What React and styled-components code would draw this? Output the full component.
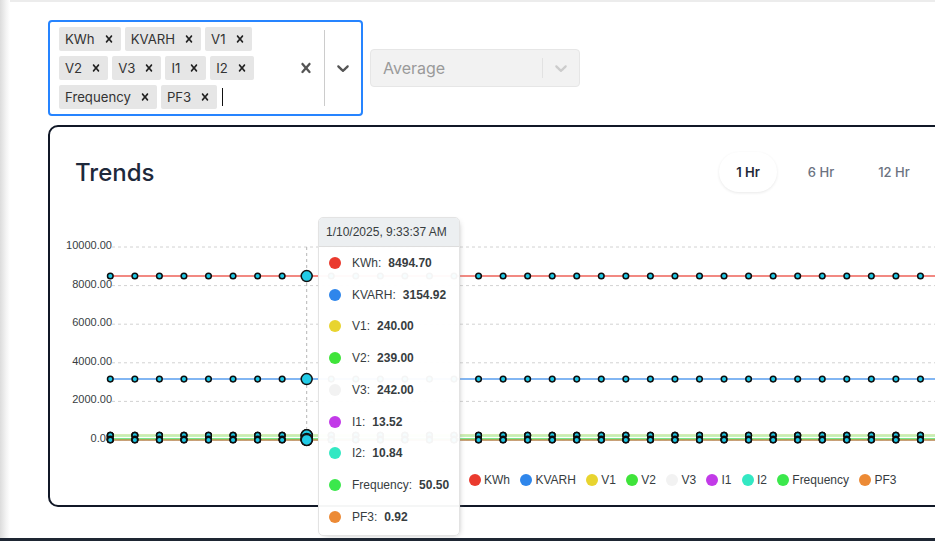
import React from "react";
import styled, { createGlobalStyle } from "styled-components";

const GlobalStyle = createGlobalStyle`
  html, body {
    margin: 0;
    padding: 0;
    background: #fff;
  }
  body {
    font-family: Inter, "Liberation Sans", sans-serif;
    overflow: hidden;
  }
  #root {
    width: 935px;
    height: 541px;
    overflow: hidden;
  }
`;

const chartFont = `"Liberation Sans", Arial, Helvetica, sans-serif`;

const series = [
  { name: "KWh", value: 8494.7, color: "#ea3a2e" },
  { name: "KVARH", value: 3154.92, color: "#2f86eb" },
  { name: "V1", value: 240, color: "#e8d42f" },
  { name: "V2", value: 239, color: "#3fe43a" },
  { name: "V3", value: 242, color: "#f2f2f2" },
  { name: "I1", value: 13.52, color: "#c23ae8" },
  { name: "I2", value: 10.84, color: "#33e8c3" },
  { name: "Frequency", value: 50.5, color: "#3be84c" },
  { name: "PF3", value: 0.92, color: "#ec8a35" },
];

const chips = ["KWh", "KVARH", "V1", "V2", "V3", "I1", "I2", "Frequency", "PF3"];

// chart geometry (svg coords)
const CHART_W = 899;
const CHART_H = 268;
const ZERO_Y = 247;
const SPAN = 193; // pixels for 10000
const X0 = 60.3;
const STEP = 24.55;
const POINTS = 35;
const HOVER = 8;
const yOf = (v) => ZERO_Y - (v / 10000) * SPAN;
const xOf = (i) => X0 + i * STEP;
const ticks = [0, 2000, 4000, 6000, 8000, 10000];

const Shell = styled.div`
  display: grid;
  grid-template-columns: 10px 1fr;
  grid-template-rows: 538px 3px;
  height: 541px;
  overflow: hidden;
`;

const SideShadow = styled.div`
  background: linear-gradient(to right, #dcdcdc, #f3f3f3 60%, #fff);
`;

const Main = styled.main`
  border-top: 2px solid #ececec;
  padding: 18px 0 0 38px;
  overflow: hidden;
`;

const FooterBar = styled.div`
  grid-column: 1 / -1;
  background: #1e2633;
`;

const Controls = styled.div`
  display: flex;
  align-items: center;
  gap: 7px;
`;

const MultiSelect = styled.div`
  box-sizing: border-box;
  width: 315px;
  display: flex;
  border: 2px solid #2684ff;
  border-radius: 4px;
  background: #fff;
`;

const ValueArea = styled.div`
  flex: 1;
  display: flex;
  flex-wrap: wrap;
  align-items: center;
  gap: 5px 4px;
  padding: 5px 6px 5px 9px;
`;

const Chip = styled.div`
  display: flex;
  align-items: center;
  height: 24px;
  background: #e6e6e6;
  border-radius: 2px;
`;

const ChipLabel = styled.span`
  font-size: 13.2px;
  color: #333;
  padding: 0 3px 0 6px;
  line-height: 24px;
`;

const ChipRemove = styled.span`
  display: flex;
  align-items: center;
  padding: 0 5px 0 4px;
  color: #222;
`;

const Caret = styled.span`
  width: 1px;
  height: 18px;
  margin-left: 1px;
  background: #111;
`;

const Indicators = styled.div`
  display: flex;
  align-items: stretch;
`;

const Indicator = styled.div`
  display: flex;
  align-items: center;
  padding: 8px;
  color: ${({ $muted }) => ($muted ? "#cccccc" : "#555555")};
`;

const Separator = styled.span`
  width: 1px;
  margin: 8px 0;
  background: ${({ $light }) => ($light ? "#e2e2e2" : "#cccccc")};
`;

const SingleSelect = styled.div`
  box-sizing: border-box;
  width: 210px;
  height: 38px;
  display: flex;
  border: 1px solid #e6e6e6;
  border-radius: 4px;
  background: #f2f2f2;
`;

const Placeholder = styled.div`
  flex: 1;
  display: flex;
  align-items: center;
  padding: 0 10px 0 12px;
  font-size: 16px;
  color: #9a9a9a;
`;

const Card = styled.section`
  box-sizing: border-box;
  width: 903px;
  margin-top: 9px;
  border: 2px solid #111827;
  border-radius: 10px;
  background: #fff;
  padding-bottom: 6px;
`;

const CardHeader = styled.div`
  display: flex;
  justify-content: space-between;
  align-items: center;
  height: 40px;
  padding: 25px 26px 0 25px;
`;

const Title = styled.h2`
  margin: 0;
  font-size: 24px;
  font-weight: 500;
  color: #1e293b;
`;

const RangeGroup = styled.div`
  display: flex;
  gap: 15px;
`;

const RangeButton = styled.button`
  width: 58px;
  height: 40px;
  border: none;
  border-radius: 20px;
  font-family: Inter, sans-serif;
  font-size: 13px;
  font-weight: ${({ $active }) => ($active ? 600 : 500)};
  color: ${({ $active }) => ($active ? "#1f2937" : "#6b7280")};
  background: #fff;
  box-shadow: ${({ $active }) =>
    $active ? "0 1px 3px rgba(0,0,0,0.09)" : "none"};
  padding: 0;
`;

const ChartWrap = styled.div`
  position: relative;
  margin-top: 1px;
`;

const Legend = styled.div`
  display: flex;
  align-items: center;
  height: 38px;
  padding-left: 419px;
  gap: 10.4px;
  font-family: ${chartFont};
  font-size: 12px;
  color: #373d3f;
`;

const LegendItem = styled.span`
  display: flex;
  align-items: center;
  gap: 3px;
`;

const Dot = styled.span`
  width: 12px;
  height: 12px;
  border-radius: 50%;
  background: ${({ $color }) => $color};
  flex-shrink: 0;
`;

const Tooltip = styled.div`
  position: absolute;
  left: 268px;
  top: 24px;
  width: 142px;
  box-sizing: border-box;
  background: rgba(255, 255, 255, 0.96);
  border: 1px solid #e3e3e3;
  border-radius: 5px;
  box-shadow: 2px 2px 6px -4px #999;
  font-family: ${chartFont};
  font-size: 12px;
  color: #373d3f;
  padding-bottom: 2px;
  overflow: hidden;
`;

const TooltipTitle = styled.div`
  height: 28px;
  line-height: 28px;
  padding: 0 7px;
  background: #eceff1;
  border-bottom: 1px solid #ddd;
`;

const TooltipRow = styled.div`
  display: flex;
  align-items: center;
  height: 31.75px;
  padding-left: 10px;
  &:first-of-type {
    margin-top: 1px;
  }
`;

const RowLabel = styled.span`
  margin-left: 11px;
`;

const RowValue = styled.span`
  margin-left: 7px;
  font-weight: 700;
`;

const CrossIcon = ({ size = 20 }) => (
  <svg width={size} height={size} viewBox="0 0 20 20" fill="currentColor">
    <path d="M14.348 14.849c-0.469 0.469-1.229 0.469-1.697 0l-2.651-3.030-2.651 3.029c-0.469 0.469-1.229 0.469-1.697 0-0.469-0.469-0.469-1.229 0-1.697l2.758-3.15-2.759-3.152c-0.469-0.469-0.469-1.228 0-1.697s1.228-0.469 1.697 0l2.652 3.031 2.651-3.031c0.469-0.469 1.228-0.469 1.697 0s0.469 1.229 0 1.697l-2.758 3.152 2.758 3.150c0.469 0.469 0.469 1.229 0 1.698z" />
  </svg>
);

const ChevronIcon = () => (
  <svg width="20" height="20" viewBox="0 0 20 20" fill="currentColor">
    <path d="M4.516 7.548c0.436-0.446 1.043-0.481 1.576 0l3.908 3.747 3.908-3.747c0.533-0.481 1.141-0.446 1.574 0 0.436 0.445 0.408 1.197 0 1.615-0.406 0.418-4.695 4.502-4.695 4.502-0.217 0.223-0.502 0.335-0.787 0.335s-0.57-0.112-0.789-0.335c0 0-4.287-4.084-4.695-4.502s-0.436-1.170 0-1.615z" />
  </svg>
);

const TrendChart = () => {
  const hx = xOf(HOVER);
  return (
    <svg width={CHART_W} height={CHART_H} style={{ display: "block" }}>
      {ticks.map((t) => (
        <g key={t}>
          <line
            x1={62}
            x2={CHART_W}
            y1={yOf(t)}
            y2={yOf(t)}
            stroke="#d2d2d2"
            strokeDasharray="3 3"
          />
          <text
            x={62}
            y={yOf(t) + 2}
            textAnchor="end"
            fontFamily={chartFont}
            fontSize="11"
            fill="#373d3f"
          >
            {t.toFixed(2)}
          </text>
        </g>
      ))}
      <line
        x1={hx}
        x2={hx}
        y1={yOf(10000)}
        y2={ZERO_Y}
        stroke="#b6b6b6"
        strokeDasharray="3 3"
      />
      {series.map((s) => (
        <line
          key={s.name}
          x1={X0}
          x2={CHART_W}
          y1={yOf(s.value)}
          y2={yOf(s.value)}
          stroke={s.color}
          strokeOpacity="0.6"
          strokeWidth="2"
        />
      ))}
      {series.map((s) =>
        Array.from({ length: POINTS }).map((_, i) =>
          i === HOVER ? null : (
            <circle
              key={s.name + i}
              cx={xOf(i)}
              cy={yOf(s.value)}
              r="2.8"
              fill="#1ec8e6"
              stroke="#0d0d0d"
              strokeWidth="1.5"
            />
          )
        )
      )}
      {series.map((s) => (
        <circle
          key={"h" + s.name}
          cx={hx}
          cy={yOf(s.value)}
          r="5.5"
          fill="#22cbe6"
          stroke="#111"
          strokeWidth="1.5"
        />
      ))}
    </svg>
  );
};

const App = () => {
  return (
    <>
      <GlobalStyle />
      <Shell>
        <SideShadow />
        <Main>
          <Controls>
            <MultiSelect>
              <ValueArea>
                {chips.map((c) => (
                  <Chip key={c}>
                    <ChipLabel>{c}</ChipLabel>
                    <ChipRemove>
                      <CrossIcon size={14} />
                    </ChipRemove>
                  </Chip>
                ))}
                <Caret />
              </ValueArea>
              <Indicators>
                <Indicator>
                  <CrossIcon />
                </Indicator>
                <Separator />
                <Indicator>
                  <ChevronIcon />
                </Indicator>
              </Indicators>
            </MultiSelect>
            <SingleSelect>
              <Placeholder>Average</Placeholder>
              <Indicators>
                <Separator $light />
                <Indicator $muted>
                  <ChevronIcon />
                </Indicator>
              </Indicators>
            </SingleSelect>
          </Controls>

          <Card>
            <CardHeader>
              <Title>Trends</Title>
              <RangeGroup>
                <RangeButton $active>1 Hr</RangeButton>
                <RangeButton>6 Hr</RangeButton>
                <RangeButton>12 Hr</RangeButton>
              </RangeGroup>
            </CardHeader>
            <ChartWrap>
              <TrendChart />
              <Legend>
                {series.map((s) => (
                  <LegendItem key={s.name}>
                    <Dot $color={s.color} />
                    {s.name}
                  </LegendItem>
                ))}
              </Legend>
              <Tooltip>
                <TooltipTitle>1/10/2025, 9:33:37 AM</TooltipTitle>
                {series.map((s) => (
                  <TooltipRow key={s.name}>
                    <Dot $color={s.color} />
                    <RowLabel>{s.name}:</RowLabel>
                    <RowValue>{s.value.toFixed(2)}</RowValue>
                  </TooltipRow>
                ))}
              </Tooltip>
            </ChartWrap>
          </Card>
        </Main>
        <FooterBar />
      </Shell>
    </>
  );
};

export default App;
